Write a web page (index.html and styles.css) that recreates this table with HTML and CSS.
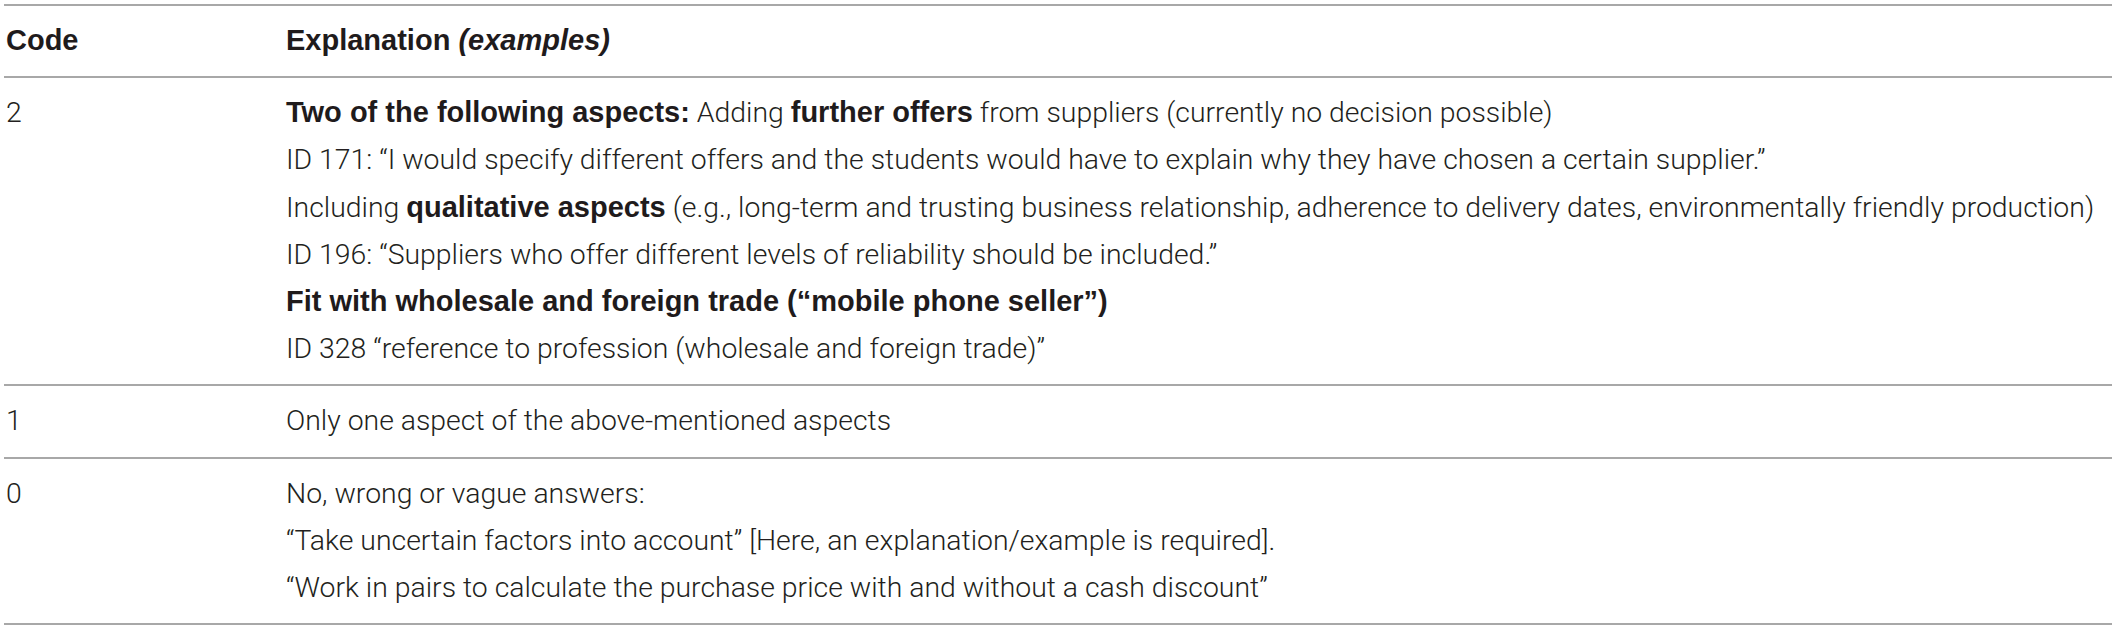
FILE: index.html
```html
<!DOCTYPE html>
<html lang="en">
<head>
<meta charset="utf-8">
<title>Coding scheme</title>
<link rel="stylesheet" href="styles.css">
</head>
<body>
<table class="coding">
  <colgroup>
    <col class="col-code-w">
    <col class="col-exp-w">
  </colgroup>
  <thead>
    <tr>
      <th>Code</th>
      <th>Explanation <em>(examples)</em></th>
    </tr>
  </thead>
  <tbody>
    <tr>
      <td>2</td>
      <td>
        <p><b>Two of the following aspects:</b> Adding <b>further offers</b> from suppliers (currently no decision possible)</p>
        <p>ID 171: “I would specify different offers and the students would have to explain why they have chosen a certain supplier.”</p>
        <p>Including <b>qualitative aspects</b> (e.g., long-term and trusting business relationship, adherence to delivery dates, environmentally friendly production)</p>
        <p>ID 196: “Suppliers who offer different levels of reliability should be included.”</p>
        <p><b>Fit with wholesale and foreign trade (“mobile phone seller”)</b></p>
        <p>ID 328 “reference to profession (wholesale and foreign trade)”</p>
      </td>
    </tr>
    <tr>
      <td>1</td>
      <td><p>Only one aspect of the above-mentioned aspects</p></td>
    </tr>
    <tr>
      <td>0</td>
      <td>
        <p>No, wrong or vague answers:</p>
        <p>“Take uncertain factors into account” [Here, an explanation/example is required].</p>
        <p>“Work in pairs to calculate the purchase price with and without a cash discount”</p>
      </td>
    </tr>
  </tbody>
</table>
</body>
</html>
```
FILE: styles.css
```css
html, body {
  margin: 0;
  padding: 0;
  background: #ffffff;
}

body {
  font-family: Roboto, "Liberation Sans", Arial, sans-serif;
  color: #231f20;
}

.coding {
  border-collapse: collapse;
  table-layout: fixed;
  margin: 4px 0 0 4px;
  width: 2108px;
  font-size: 28.4px;
  line-height: 47.2px;
  font-weight: 300;
}

.col-code-w {
  width: 280px;
}

.coding th,
.coding td {
  text-align: left;
  vertical-align: top;
  padding: 11px 0 12px 2px;
  border-top: 2px solid #a8a8a8;
  border-bottom: 2px solid #a8a8a8;
}

.coding th {
  font-family: "Liberation Sans", Arial, sans-serif;
  font-weight: 700;
  font-size: 29px;
  color: #1f1b1c;
}

.coding th em {
  font-style: italic;
}

.coding p {
  margin: 0;
  white-space: nowrap;
}

.coding b {
  font-family: "Liberation Sans", Arial, sans-serif;
  font-weight: 700;
  font-size: 29px;
  color: #1f1b1c;
}
```
